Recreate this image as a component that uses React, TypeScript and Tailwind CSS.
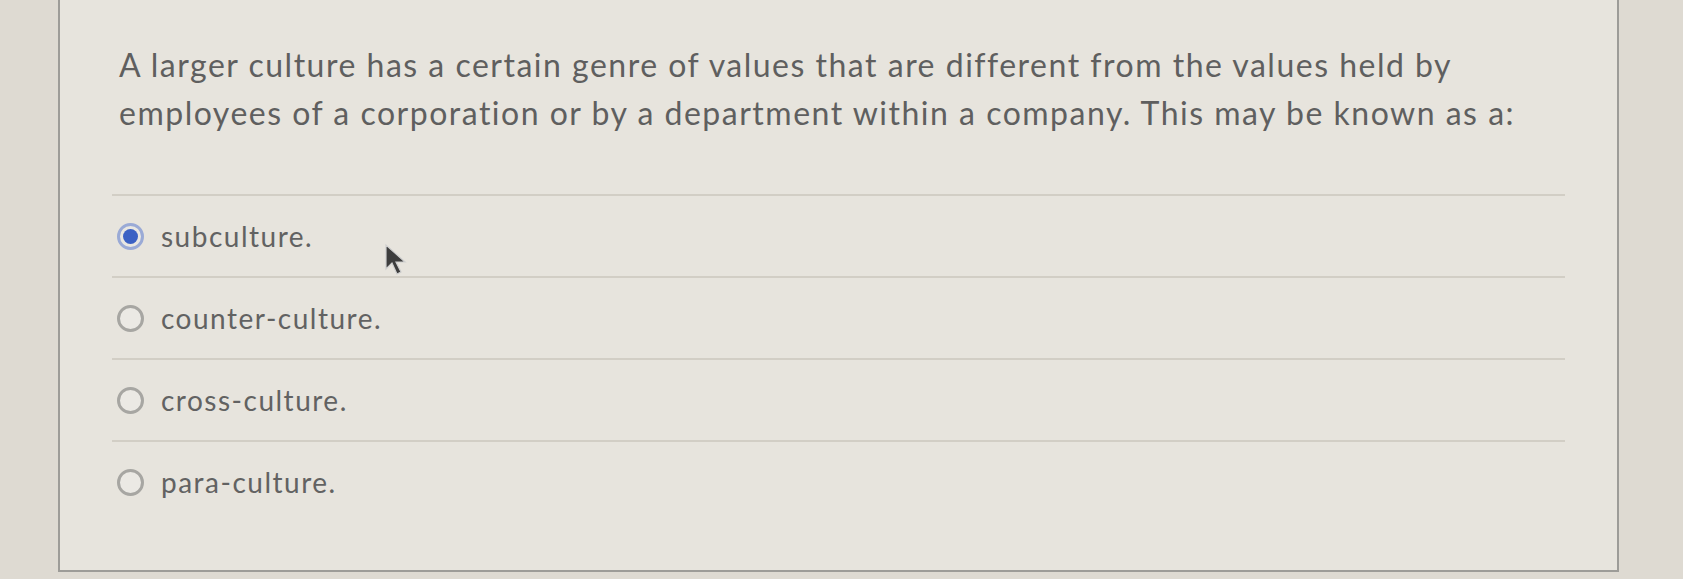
import React from "react";

const options = [
  { label: "subculture.", selected: true },
  { label: "counter-culture.", selected: false },
  { label: "cross-culture.", selected: false },
  { label: "para-culture.", selected: false },
];

function Radio({ selected }: { selected: boolean }) {
  if (selected) {
    return (
      <span className="flex h-[27px] w-[27px] shrink-0 items-center justify-center rounded-full border-[3px] border-[#9aaad6] bg-[#e9e7e2]">
        <span className="h-[15px] w-[15px] rounded-full bg-[#3b61c4]" />
      </span>
    );
  }
  return <span className="h-[27px] w-[27px] shrink-0 rounded-full border-[3px] border-[#a7a6a2] bg-[#ebe9e4]" />;
}

export default function App() {
  return (
    <div
      className="relative h-[579px] w-[1683px] overflow-hidden bg-[#dedad2] pl-[58px]"
      style={{ fontFamily: "Lato, 'Open Sans', sans-serif" }}
    >
      <div className="flex h-[572px] w-[1561px] flex-col border-x-2 border-b-2 border-[#9d9c98] bg-[#e7e4dd] px-[52px]">
        <p className="pl-[7px] pt-[41px] text-[32px] leading-[48px] tracking-[1.5px] text-[#5f5f5f]">
          A larger culture has a certain genre of values that are different from the values held by
          <br />
          employees of a corporation or by a department within a company. This may be known as a:
        </p>

        <div className="mt-[57px] flex flex-col">
          {options.map((o) => (
            <div
              key={o.label}
              className="flex h-[82px] items-center gap-[17px] border-t-2 border-[#d2cec5] pl-[5px]"
            >
              <Radio selected={o.selected} />
              <span className="text-[28px] tracking-[1.5px] text-[#626262]">{o.label}</span>
            </div>
          ))}
        </div>
      </div>

      {/* mouse pointer */}
      <svg className="absolute left-[384px] top-[243px]" width="24" height="34" viewBox="0 0 24 34">
        <path d="M2 2 L2 26 L8 20 L13 31 L17 29 L12 19 L21 19 Z" fill="#3d3d3d" stroke="#cfcfcf" strokeWidth="1.2" />
      </svg>
    </div>
  );
}
